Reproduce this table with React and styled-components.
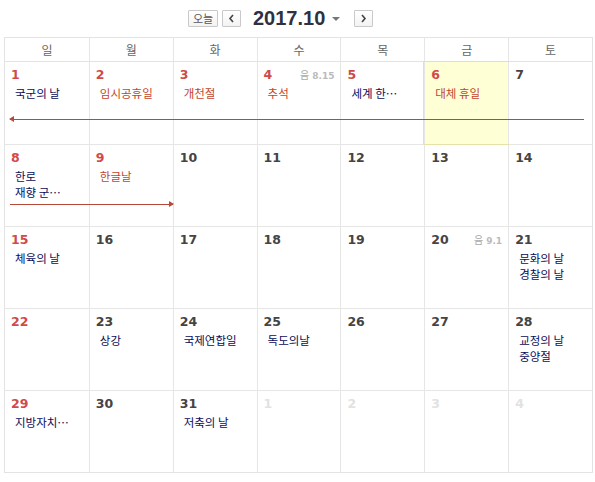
import React from 'react'
import styled, { createGlobalStyle } from 'styled-components'

const Global = createGlobalStyle`
  body {
    margin: 0;
    background: #fff;
    font-family: "Noto Sans CJK KR", "Liberation Sans", sans-serif;
  }
`

const Page = styled.div`
  width: 595px;
  height: 482px;
  padding: 0 2px 0 4px;
  box-sizing: border-box;
`

const Toolbar = styled.div`
  height: 37px;
  display: flex;
  align-items: center;
  padding-left: 184px;
  box-sizing: border-box;
`

const SmallButton = styled.button`
  height: 17px;
  min-width: ${p => (p.wide ? '30px' : '19px')};
  padding: 0 ${p => (p.wide ? '3px' : '0')};
  margin-right: ${p => p.gap || 0}px;
  border: 1px solid #c9c9c9;
  border-radius: 1px;
  background: linear-gradient(#fff, #f3f3f3);
  color: #555;
  font-family: "Noto Sans CJK KR", sans-serif;
  font-size: 11px;
  line-height: 15px;
  display: flex;
  align-items: center;
  justify-content: center;
  box-sizing: border-box;
`

const Title = styled.div`
  display: flex;
  align-items: center;
  margin: 0 14px 0 12px;
  font-family: "Liberation Sans", Arial, sans-serif;
  font-weight: bold;
  font-size: 20px;
  color: #2f3040;
`

const Caret = styled.span`
  margin-left: 7px;
  width: 0;
  height: 0;
  border-left: 4px solid transparent;
  border-right: 4px solid transparent;
  border-top: 4px solid #777;
`

const Table = styled.div`
  border: 1px solid #e3e3e3;
  width: 589px;
  box-sizing: border-box;
`

const HeadRow = styled.div`
  display: grid;
  grid-template-columns: repeat(7, 1fr);
  height: 23px;
  border-bottom: 1px solid #e3e3e3;
`

const HeadCell = styled.div`
  display: flex;
  align-items: center;
  justify-content: center;
  color: #666;
  font-size: 12px;
  border-left: ${p => (p.first ? 'none' : '1px solid #e6e6e6')};
`

const Week = styled.div`
  display: grid;
  grid-template-columns: repeat(7, 1fr);
  height: 82px;
  border-top: ${p => (p.first ? 'none' : '1px solid #e6e6e6')};
  box-sizing: border-box;
`

const Cell = styled.div`
  grid-row: 1;
  grid-column: ${p => p.col};
  padding: 5px 0 0 6px;
  background: ${p => (p.today ? '#ffffd6' : 'transparent')};
  border-left: ${p => (p.col === 1 ? 'none' : '1px solid #e6e6e6')};
  outline: ${p => (p.today ? '1px solid #e8e2a8' : 'none')};
  min-width: 0;
  overflow: hidden;
`

const DayTop = styled.div`
  display: flex;
  justify-content: space-between;
  align-items: baseline;
  padding-right: 6px;
`

const DayNum = styled.span`
  font-family: "DejaVu Sans", Verdana, sans-serif;
  font-weight: bold;
  font-size: 12.5px;
  color: ${p => (p.tone === 'red' ? '#d04a4a' : p.tone === 'dim' ? '#e2e2e2' : '#444')};
`

const Lunar = styled.span`
  font-size: 10px;
  color: #aaa;
  font-family: "Noto Sans CJK KR", sans-serif;
  & b {
    font-family: "DejaVu Sans", sans-serif;
    font-weight: bold;
    font-size: 9px;
    color: #bbb;
    margin-left: 3px;
  }
`

const Events = styled.div`
  margin-top: 3px;
  padding-left: 4px;
  display: flex;
  flex-direction: column;
`

const EventText = styled.div`
  font-size: 11.5px;
  line-height: 16px;
  height: 16px;
  white-space: nowrap;
  color: ${p => (p.red ? '#c2452e' : '#0b0b5a')};
`

const Bar = styled.div`
  grid-row: 1;
  grid-column: ${p => p.span};
  align-self: start;
  margin-top: ${p => p.top}px;
  margin-left: ${p => p.ml || 0}px;
  margin-right: ${p => p.mr || 0}px;
  height: 1px;
  background: #b5493a;
  position: relative;
  pointer-events: none;
  &::before {
    content: '';
    position: absolute;
    top: -3px;
    ${p => (p.dir === 'left' ? 'left: -1px;' : 'right: -1px;')}
    border-top: 3.5px solid transparent;
    border-bottom: 3.5px solid transparent;
    ${p => (p.dir === 'left' ? 'border-right: 5px solid #b5493a;' : 'border-left: 5px solid #b5493a;')}
  }
`

const days = ['일', '월', '화', '수', '목', '금', '토']

const weeks = [
  {
    cells: [
      { n: 1, tone: 'red', ev: [{ t: '국군의 날' }] },
      { n: 2, tone: 'red', ev: [{ t: '임시공휴일', red: true }] },
      { n: 3, tone: 'red', ev: [{ t: '개천절', red: true }] },
      { n: 4, tone: 'red', lunar: '8.15', ev: [{ t: '추석', red: true }] },
      { n: 5, tone: 'red', ev: [{ t: '세계 한…' }] },
      { n: 6, tone: 'red', today: true, ev: [{ t: '대체 휴일', red: true }] },
      { n: 7 },
    ],
    bar: { span: '1 / 8', top: 57, ml: 5, mr: 8, dir: 'left' },
  },
  {
    cells: [
      { n: 8, tone: 'red', ev: [{ t: '한로' }, { t: '재향 군…' }] },
      { n: 9, tone: 'red', ev: [{ t: '한글날', red: true }] },
      { n: 10 },
      { n: 11 },
      { n: 12 },
      { n: 13 },
      { n: 14 },
    ],
    bar: { span: '1 / 3', top: 59, ml: 5, mr: 0, dir: 'right' },
  },
  {
    cells: [
      { n: 15, tone: 'red', ev: [{ t: '체육의 날' }] },
      { n: 16 },
      { n: 17 },
      { n: 18 },
      { n: 19 },
      { n: 20, lunar: '9.1' },
      { n: 21, ev: [{ t: '문화의 날' }, { t: '경찰의 날' }] },
    ],
  },
  {
    cells: [
      { n: 22, tone: 'red' },
      { n: 23, ev: [{ t: '상강' }] },
      { n: 24, ev: [{ t: '국제연합일' }] },
      { n: 25, ev: [{ t: '독도의날' }] },
      { n: 26 },
      { n: 27 },
      { n: 28, ev: [{ t: '교정의 날' }, { t: '중양절' }] },
    ],
  },
  {
    cells: [
      { n: 29, tone: 'red', ev: [{ t: '지방자치…' }] },
      { n: 30 },
      { n: 31, ev: [{ t: '저축의 날' }] },
      { n: 1, tone: 'dim' },
      { n: 2, tone: 'dim' },
      { n: 3, tone: 'dim' },
      { n: 4, tone: 'dim' },
    ],
  },
]

export default function App() {
  return (
    <>
      <Global />
      <Page>
        <Toolbar>
          <SmallButton wide gap={4}>오늘</SmallButton>
          <SmallButton>
            <svg width="7" height="9" viewBox="0 0 7 9">
              <path d="M5 1 L2 4.5 L5 8" stroke="#444" strokeWidth="1.6" fill="none" />
            </svg>
          </SmallButton>
          <Title>
            2017.10
            <Caret />
          </Title>
          <SmallButton>
            <svg width="7" height="9" viewBox="0 0 7 9">
              <path d="M2 1 L5 4.5 L2 8" stroke="#444" strokeWidth="1.6" fill="none" />
            </svg>
          </SmallButton>
        </Toolbar>
        <Table>
          <HeadRow>
            {days.map((d, i) => (
              <HeadCell key={d} first={i === 0}>{d}</HeadCell>
            ))}
          </HeadRow>
          {weeks.map((w, wi) => (
            <Week key={wi} first={wi === 0}>
              {w.cells.map((c, ci) => (
                <Cell key={ci} col={ci + 1} today={c.today}>
                  <DayTop>
                    <DayNum tone={c.tone}>{c.n}</DayNum>
                    {c.lunar && (
                      <Lunar>
                        음<b>{c.lunar}</b>
                      </Lunar>
                    )}
                  </DayTop>
                  {c.ev && (
                    <Events>
                      {c.ev.map((e, ei) => (
                        <EventText key={ei} red={e.red}>{e.t}</EventText>
                      ))}
                    </Events>
                  )}
                </Cell>
              ))}
              {w.bar && (
                <Bar span={w.bar.span} top={w.bar.top} ml={w.bar.ml} mr={w.bar.mr} dir={w.bar.dir} />
              )}
            </Week>
          ))}
        </Table>
      </Page>
    </>
  )
}
